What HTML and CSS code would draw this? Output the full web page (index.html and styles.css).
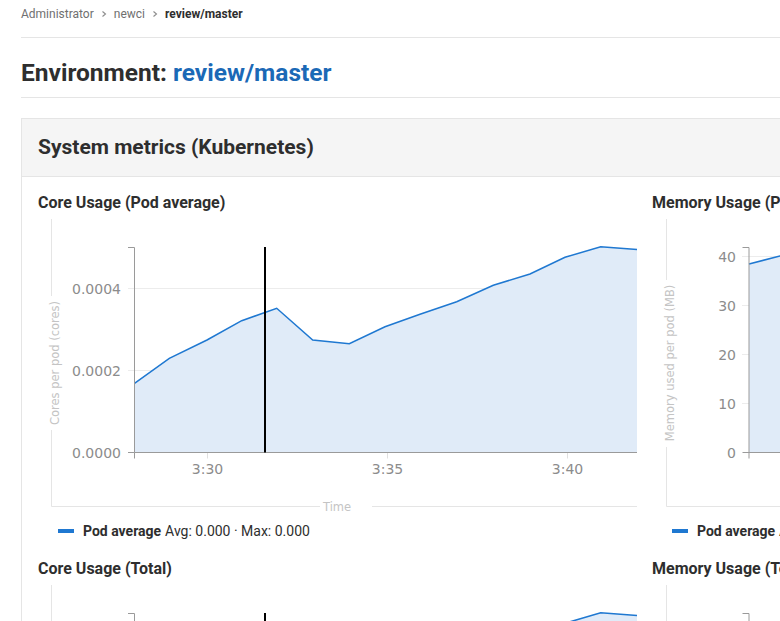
FILE: index.html
```html
<!DOCTYPE html>
<html>
<head>
<meta charset="utf-8">
<link rel="stylesheet" href="styles.css">
</head>
<body>
<div class="page">
  <nav class="breadcrumbs">
    <a class="crumb">Administrator</a>
    <svg class="chev" width="8" height="8" viewBox="0 0 8 8"><path d="M2.5 1.5 L5.5 4 L2.5 6.5" fill="none" stroke="#8c8c8c" stroke-width="1.1"/></svg>
    <a class="crumb">newci</a>
    <svg class="chev" width="8" height="8" viewBox="0 0 8 8"><path d="M2.5 1.5 L5.5 4 L2.5 6.5" fill="none" stroke="#8c8c8c" stroke-width="1.1"/></svg>
    <a class="crumb active">review/master</a>
  </nav>
  <h1 class="page-title">Environment: <a class="env-link">review/master</a></h1>

  <section class="card">
    <header class="card-header"><h2>System metrics (Kubernetes)</h2></header>
    <div class="card-body graphs">

      <div class="graph">
        <h3 class="graph-title">Core Usage (Pod average)</h3>
        <svg class="chart" width="599" height="288" viewBox="0 0 599 288">
          <path d="M13.5 0 V77 M13.5 211 V287.5 H282 M334 287.5 H599" fill="none" stroke="#e5e5e5"/>
          <text class="axis-title" transform="translate(16.5 144) rotate(-90)" text-anchor="middle" dominant-baseline="central">Cores per pod (cores)</text>
          <text class="axis-title" x="285" y="287.5" dominant-baseline="central">Time</text>
          <path d="M90 69.5 H599 M90 151.5 H599" stroke="#ececec" fill="none"/>
          <path d="M169.5 233.5 V239.5 M349.5 233.5 V239.5 M529.5 233.5 V239.5" stroke="#e0e0e0" fill="none"/>
          <path class="area" d="M96.5 164.3 L131.3 139.3 L169 121 L203.7 101.7 L238.7 89.3 L274.7 121 L311.3 124.7 L347 107.7 L382 95.3 L418.7 82.7 L455.3 66.3 L492 55 L527 38.3 L562.7 27.7 L599 30.6 L599 233.5 L96.5 233.5 Z"/>
          <path class="line" d="M96.5 164.3 L131.3 139.3 L169 121 L203.7 101.7 L238.7 89.3 L274.7 121 L311.3 124.7 L347 107.7 L382 95.3 L418.7 82.7 L455.3 66.3 L492 55 L527 38.3 L562.7 27.7 L599 30.6"/>
          <path d="M90 28.5 H96.5 V233.5 H90 M96.5 239.5 V233.5 H599" fill="none" stroke="#9a9a9a"/>
          <path d="M227 28 V233.5" stroke="#000" stroke-width="2"/>
          <g class="tick-label" text-anchor="end">
            <text x="83" y="69.5" dominant-baseline="central">0.0004</text>
            <text x="83" y="151.5" dominant-baseline="central">0.0002</text>
            <text x="83" y="233.5" dominant-baseline="central">0.0000</text>
          </g>
          <g class="tick-label" text-anchor="middle">
            <text x="169.5" y="250" dominant-baseline="central">3:30</text>
            <text x="349.5" y="250" dominant-baseline="central">3:35</text>
            <text x="529.5" y="250" dominant-baseline="central">3:40</text>
          </g>
        </svg>
        <div class="legend"><span class="swatch"></span><strong>Pod average</strong> Avg: 0.000 · Max: 0.000</div>
      </div>

      <div class="graph">
        <h3 class="graph-title">Memory Usage (Pod average)</h3>
        <svg class="chart" width="599" height="288" viewBox="0 0 599 288">
          <path d="M14.5 0 V61 M14.5 228 V287.5 H282 M334 287.5 H599" fill="none" stroke="#e5e5e5"/>
          <text class="axis-title" transform="translate(17.5 144) rotate(-90)" text-anchor="middle" dominant-baseline="central">Memory used per pod (MB)</text>
          <text class="axis-title" x="285" y="287.5" dominant-baseline="central">Time</text>
          <path d="M90 37.5 H599 M90 86.5 H599 M90 135.5 H599 M90 184.5 H599" stroke="#ececec" fill="none"/>
          <path class="area" d="M97 45 L128 37 L170 33 L210 36 L250 34 L300 35 L350 33 L400 34 L450 32 L500 33 L550 31 L599 32 L599 233.5 L97 233.5 Z"/>
          <path class="line" d="M97 45 L128 37 L170 33 L210 36 L250 34 L300 35 L350 33 L400 34 L450 32 L500 33 L550 31 L599 32"/>
          <path d="M90.5 28.5 H97 V233.5 H90.5 M97 239.5 V233.5 H599" fill="none" stroke="#9a9a9a"/>
          <g class="tick-label" text-anchor="end">
            <text x="84" y="37.5" dominant-baseline="central">40</text>
            <text x="84" y="86.5" dominant-baseline="central">30</text>
            <text x="84" y="135.5" dominant-baseline="central">20</text>
            <text x="84" y="184.5" dominant-baseline="central">10</text>
            <text x="84" y="233.5" dominant-baseline="central">0</text>
          </g>
        </svg>
        <div class="legend"><span class="swatch"></span><strong>Pod average</strong> Avg: 38.59 · Max: 40.12</div>
      </div>

      <div class="graph">
        <h3 class="graph-title">Core Usage (Total)</h3>
        <svg class="chart" width="599" height="288" viewBox="0 0 599 288">
          <path d="M13.5 0 V77 M13.5 211 V287.5 H282 M334 287.5 H599" fill="none" stroke="#e5e5e5"/>
          <path d="M90 69.5 H599 M90 151.5 H599" stroke="#ececec" fill="none"/>
          <path class="area" d="M96.5 164.3 L131.3 139.3 L169 121 L203.7 101.7 L238.7 89.3 L274.7 121 L311.3 124.7 L347 107.7 L382 95.3 L418.7 82.7 L455.3 66.3 L492 55 L527 38.3 L562.7 27.7 L599 30.6 L599 233.5 L96.5 233.5 Z"/>
          <path class="line" d="M96.5 164.3 L131.3 139.3 L169 121 L203.7 101.7 L238.7 89.3 L274.7 121 L311.3 124.7 L347 107.7 L382 95.3 L418.7 82.7 L455.3 66.3 L492 55 L527 38.3 L562.7 27.7 L599 30.6"/>
          <path d="M90 28.5 H96.5 V233.5 H90 M96.5 239.5 V233.5 H599" fill="none" stroke="#9a9a9a"/>
          <path d="M227 28 V233.5" stroke="#000" stroke-width="2"/>
        </svg>
      </div>

      <div class="graph">
        <h3 class="graph-title">Memory Usage (Total)</h3>
        <svg class="chart" width="599" height="288" viewBox="0 0 599 288">
          <path d="M14.5 0 V61 M14.5 228 V287.5 H282 M334 287.5 H599" fill="none" stroke="#e5e5e5"/>
          <path d="M90.5 28.5 H97 V233.5 H90.5" fill="none" stroke="#9a9a9a"/>
        </svg>
      </div>

    </div>
  </section>
</div>
</body>
</html>
```

FILE: styles.css
```css
html, body {
  margin: 0;
  padding: 0;
  overflow: hidden;
  background: #fff;
}

body {
  font-family: Roboto, "Liberation Sans", sans-serif;
  color: #2e2e2e;
}

.page {
  width: 1300px;
  padding-left: 21px;
}

.breadcrumbs {
  display: flex;
  align-items: center;
  gap: 6px;
  height: 22px;
  padding-top: 3px;
  padding-bottom: 12px;
  border-bottom: 1px solid #e5e5e5;
  font-size: 12px;
  line-height: 16px;
}

.crumb {
  color: #707070;
}

.crumb.active {
  color: #2e2e2e;
  font-weight: 700;
}

.chev {
  display: block;
}

.page-title {
  margin: 0;
  padding: 20px 0 9px;
  font-size: 24.5px;
  line-height: 30px;
  font-weight: 700;
  color: #2e2e2e;
  border-bottom: 1px solid #e5e5e5;
}

.env-link {
  color: #1b69b6;
}

.card {
  margin-top: 20px;
  border: 1px solid #e5e5e5;
  border-right: none;
}

.card-header {
  background: #f5f5f5;
  border-bottom: 1px solid #e5e5e5;
  padding: 16px;
}

.card-header h2 {
  margin: 0;
  font-size: 21px;
  line-height: 25px;
  font-weight: 700;
}

.graphs {
  display: grid;
  grid-template-columns: 599px 599px;
  column-gap: 15px;
  padding: 16px 16px 0;
}

.graph {
  display: flex;
  flex-direction: column;
  margin-bottom: 18px;
}

.graph-title {
  margin: 0 0 6px;
  font-size: 16px;
  line-height: 20px;
  font-weight: 700;
  white-space: nowrap;
}

.chart {
  display: block;
  overflow: visible;
}

.axis-title {
  font-family: "DejaVu Sans", sans-serif;
  font-size: 11.5px;
  fill: #c4c4c4;
}

.tick-label {
  font-family: "DejaVu Sans", sans-serif;
  font-size: 14px;
  fill: #8c8c8c;
}

.area {
  fill: #e0ebf8;
  stroke: none;
}

.line {
  fill: none;
  stroke: #1f78d1;
  stroke-width: 1.5;
}

.legend {
  display: flex;
  align-items: center;
  margin-top: 14px;
  padding-left: 20px;
  font-size: 14px;
  line-height: 20px;
  white-space: nowrap;
}

.legend strong {
  font-weight: 700;
  margin-right: 4px;
}

.swatch {
  display: block;
  width: 16px;
  height: 4px;
  background: #1f78d1;
  margin-right: 9px;
}
```
